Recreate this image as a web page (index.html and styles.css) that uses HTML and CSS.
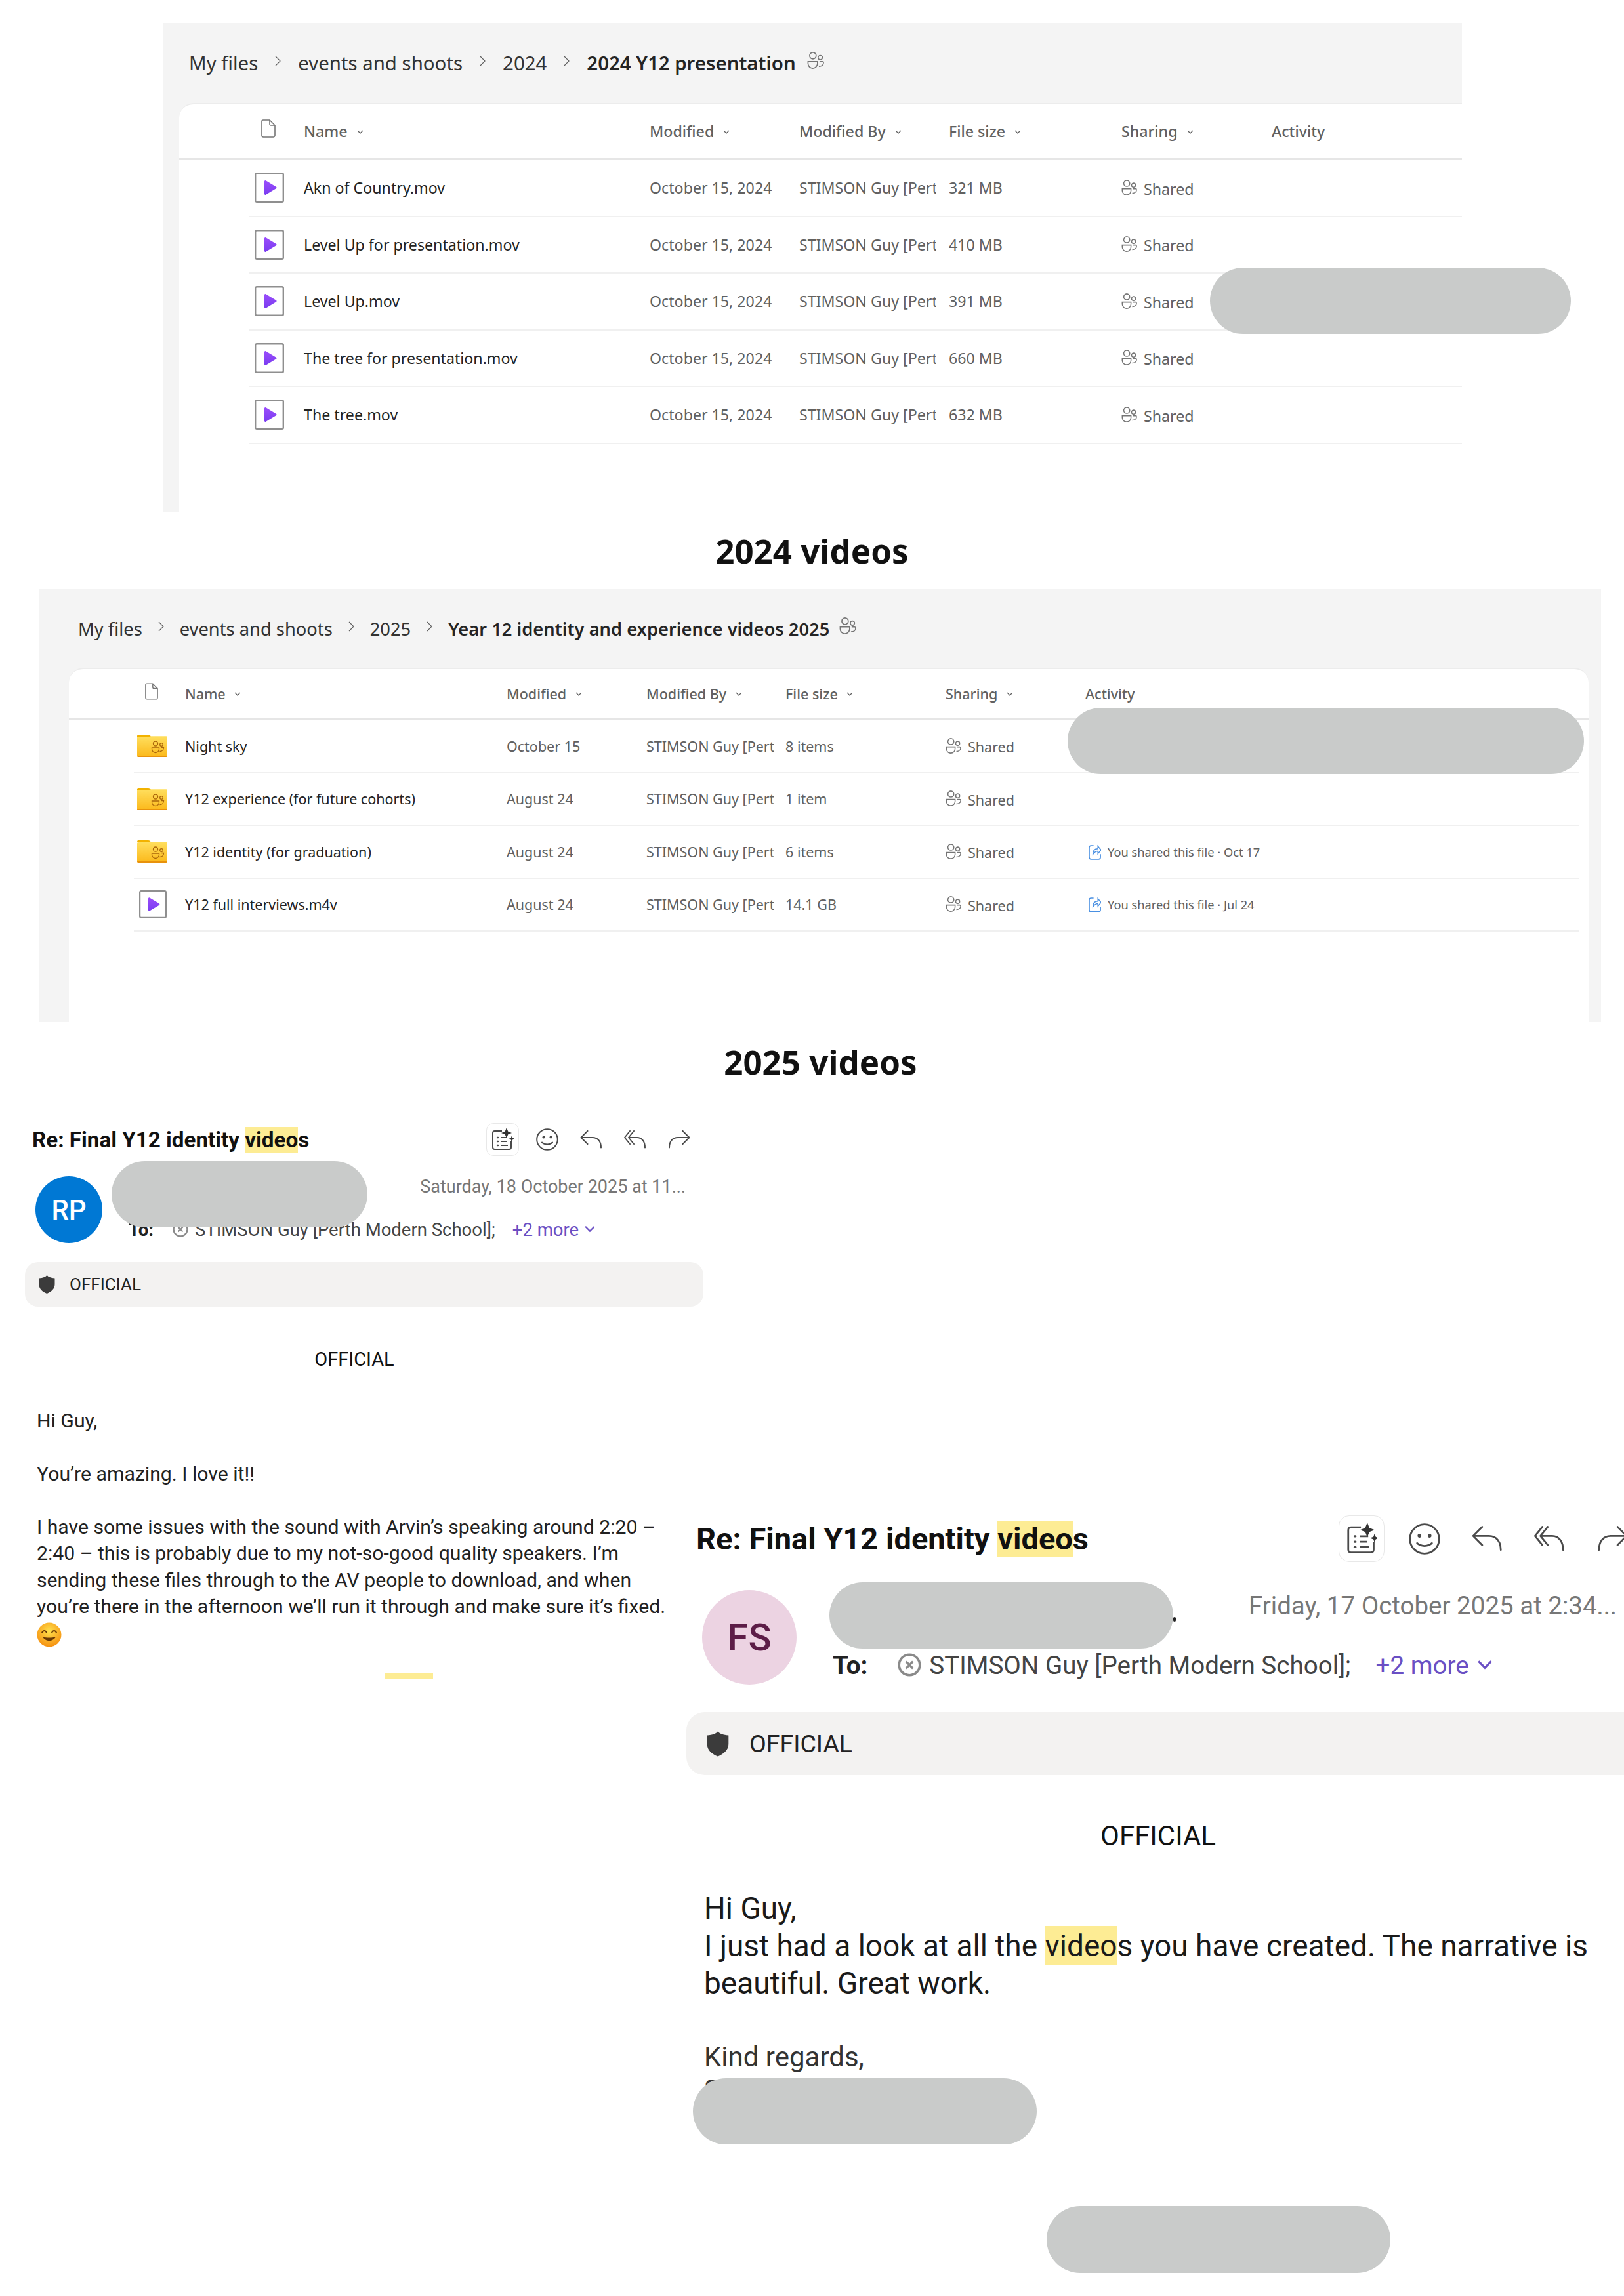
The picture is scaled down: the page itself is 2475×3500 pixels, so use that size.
FILE: index.html
```html
<!DOCTYPE html>
<html lang="en">
<head>
    <meta charset="UTF-8">
    <meta name="viewport" content="width=device-width, initial-scale=1.0">
    <title>Y12 videos</title>
    <link rel="stylesheet" href="styles.css">
</head>
<body>
    <svg class="defs" width="0" height="0">
        <defs>
            <symbol id="people" viewBox="0 0 22 22">
                <g fill="none" stroke="currentColor" stroke-width="1.4">
                    <circle cx="7.5" cy="5" r="4.2"/>
                    <circle cx="17" cy="7.5" r="2.8"/>
                    <path d="M1.2 12.5h12.2v2.6a6.1 6.1 0 0 1-12.2 0z"/>
                    <path d="M16 12.5h3.8a1.4 1.4 0 0 1 1.4 1.4c0 2.8-2.4 4.8-6 4.8"/>
                </g>
            </symbol>
            <symbol id="chev-right" viewBox="0 0 11 16">
                <path d="M2 1l7 7-7 7" fill="none" stroke="#616161" stroke-width="1.2"/>
            </symbol>
            <symbol id="chev-down" viewBox="0 0 10 7">
                <path d="M1 1l4 4 4-4" fill="none" stroke="currentColor" stroke-width="1.3"/>
            </symbol>
            <symbol id="doc" viewBox="0 0 22 28">
                <path d="M3 1h10l8 8v15.5a2.5 2.5 0 0 1-2.5 2.5h-15A2.5 2.5 0 0 1 1 24.500V3a2 2 0 0 1 2-2zM13 1v6a2 2 0 0 0 2 2h6" fill="none" stroke="#757575" stroke-width="1.6"/>
            </symbol>
            <linearGradient id="purple" x1="0" y1="0" x2="0" y2="1">
                <stop offset="0" stop-color="#9a4dfb"/>
                <stop offset="1" stop-color="#7a3cf0"/>
            </linearGradient>
            <symbol id="play" viewBox="0 0 45 46">
                <rect x="1.200" y="1.200" width="42.600" height="43.600" rx="2" fill="#fff" stroke="#8f8f8f" stroke-width="2.400"/>
                <path d="M15 13.500a1.500 1.500 0 0 1 2.200-1.300l15.600 9.500a1.500 1.500 0 0 1 0 2.600l-15.600 9.500a1.500 1.500 0 0 1-2.200-1.300z" fill="url(#purple)"/>
            </symbol>
            <linearGradient id="folder-fill" x1="0" y1="0" x2="0" y2="1">
                <stop offset="0" stop-color="#ffdf5e"/>
                <stop offset="1" stop-color="#fbb81a"/>
            </linearGradient>
            <symbol id="folder" viewBox="0 0 46 34">
                <path d="M2 0h15c2 0 3 1 4 3h-21V2a2 2 0 0 1 2-2z" fill="#f2b200"/>
                <path d="M0 4.500a1.500 1.500 0 0 1 1.500-1.500h17l3-.8h23a1.500 1.500 0 0 1 1.500 1.500V32a2 2 0 0 1-2 2H2a2 2 0 0 1-2-2z" fill="url(#folder-fill)"/>
                <path d="M0 32h46a2 2 0 0 1-2 2H2a2 2 0 0 1-2-2z" fill="#e8920c"/>
                <g fill="none" stroke="#a9650a" stroke-width="1.300">
                    <circle cx="28" cy="13.500" r="3.500"/>
                    <circle cx="37" cy="15" r="2.300"/>
                    <path d="M22.500 20h11v2a5.500 5.500 0 0 1-11 0z"/>
                    <path d="M36 19.500h4.500c0 3.500-2.500 6-6 6"/>
                </g>
            </symbol>
            <symbol id="shared-file" viewBox="0 0 20 26">
                <path d="M8 3H4a3 3 0 0 0-3 3v16a3 3 0 0 0 3 3h12a3 3 0 0 0 3-3v-5" fill="none" stroke="#4a90e2" stroke-width="1.800"/>
                <path d="M7 17c0-6 3-9 8-9V4l5 6-5 6v-4c-3 0-5 1-8 5z" fill="none" stroke="#4a90e2" stroke-width="1.600"/>
            </symbol>
            <symbol id="copilot" viewBox="0 0 34 36">
                <path d="M16 5H5a3 3 0 0 0-3 3v22a3 3 0 0 0 3 3h22a3 3 0 0 0 3-3V21" fill="none" stroke="#4a4a4a" stroke-width="2"/>
                <path d="M9 15h1M9 21h1M9 27h1" stroke="#4a4a4a" stroke-width="2.400" stroke-linecap="round"/>
                <path d="M15 15h9M15 21h8M15 27h10" stroke="#4a4a4a" stroke-width="2"/>
                <path d="M23 0l2.300 5.700L31 8l-5.700 2.300L23 16l-2.300-5.700L15 8l5.700-2.300zM31 12l1.300 3.700L36 17l-3.700 1.300L31 22l-1.300-3.700L26 17l3.700-1.300z" fill="#333"/>
            </symbol>
            <symbol id="smile" viewBox="0 0 34 34">
                <circle cx="17" cy="17" r="15.800" fill="none" stroke="#4a4a4a" stroke-width="2"/>
                <circle cx="11.500" cy="13.500" r="2" fill="#4a4a4a"/>
                <circle cx="22.500" cy="13.500" r="2" fill="#4a4a4a"/>
                <path d="M9 21.500c4 4 12 4 16 0" fill="none" stroke="#4a4a4a" stroke-width="2" stroke-linecap="round"/>
            </symbol>
            <symbol id="reply" viewBox="0 0 34 28">
                <path d="M11.500 1L1.500 11l10 10M1.500 11H19c8 0 13 6 13 15.500" fill="none" stroke="#4a4a4a" stroke-width="2" stroke-linecap="round" stroke-linejoin="round"/>
            </symbol>
            <symbol id="reply-all" viewBox="0 0 34 28">
                <path d="M9 1L1 11l8 10M15 1L7 11l8 10M7 11h13c7 0 12 6 12 15.500" fill="none" stroke="#4a4a4a" stroke-width="2" stroke-linecap="round" stroke-linejoin="round"/>
            </symbol>
            <symbol id="forward" viewBox="0 0 34 28">
                <path d="M22.500 1l10 10-10 10M32.500 11H15C7 11 2 17 2 26.500" fill="none" stroke="#4a4a4a" stroke-width="2" stroke-linecap="round" stroke-linejoin="round"/>
            </symbol>
            <symbol id="shield" viewBox="0 0 25 28">
                <path d="M12.500 0c2 2.500 6 4 12 4.500V14c0 6.500-5 11-12 14C5 25 .5 20.500.5 14V4.500C6.500 4 10.500 2.500 12.500 0z" fill="#3b3b3b"/>
            </symbol>
            <symbol id="blocked" viewBox="0 0 24 24">
                <circle cx="12" cy="12" r="10.500" fill="none" stroke="#8a8a8a" stroke-width="2.400"/>
                <path d="M8.500 8.500l7 7M15.500 8.500l-7 7" stroke="#8a8a8a" stroke-width="2.200"/>
            </symbol>
            <radialGradient id="emoji-fill" cx="0.500" cy="0.350" r="0.700">
                <stop offset="0" stop-color="#ffe14d"/>
                <stop offset="1" stop-color="#f58a0b"/>
            </radialGradient>
        </defs>
    </svg>

    <!-- 2024 folder -->
    <section class="drive drive-a">
        <div class="crumbs">
            <span>My files</span>
            <svg class="chev"><use href="#chev-right"/></svg>
            <span>events and shoots</span>
            <svg class="chev"><use href="#chev-right"/></svg>
            <span>2024</span>
            <svg class="chev"><use href="#chev-right"/></svg>
            <b>2024 Y12 presentation</b>
            <svg class="crumb-people"><use href="#people"/></svg>
        </div>
        <div class="list">
            <div class="row head">
                <svg class="doc"><use href="#doc"/></svg>
                <span>Name <svg class="sort"><use href="#chev-down"/></svg></span>
                <span>Modified <svg class="sort"><use href="#chev-down"/></svg></span>
                <span>Modified By <svg class="sort"><use href="#chev-down"/></svg></span>
                <span>File size <svg class="sort"><use href="#chev-down"/></svg></span>
                <span>Sharing <svg class="sort"><use href="#chev-down"/></svg></span>
                <span>Activity</span>
            </div>
            <div class="row">
                <svg class="play"><use href="#play"/></svg>
                <span class="name">Akn of Country.mov</span>
                <span>October 15, 2024</span>
                <span class="by">STIMSON Guy [Pert</span>
                <span>321 MB</span>
                <span class="shared"><svg class="people"><use href="#people"/></svg>Shared</span>
            </div>
            <div class="row">
                <svg class="play"><use href="#play"/></svg>
                <span class="name">Level Up for presentation.mov</span>
                <span>October 15, 2024</span>
                <span class="by">STIMSON Guy [Pert</span>
                <span>410 MB</span>
                <span class="shared"><svg class="people"><use href="#people"/></svg>Shared</span>
            </div>
            <div class="row">
                <svg class="play"><use href="#play"/></svg>
                <span class="name">Level Up.mov</span>
                <span>October 15, 2024</span>
                <span class="by">STIMSON Guy [Pert</span>
                <span>391 MB</span>
                <span class="shared"><svg class="people"><use href="#people"/></svg>Shared</span>
            </div>
            <div class="row">
                <svg class="play"><use href="#play"/></svg>
                <span class="name">The tree for presentation.mov</span>
                <span>October 15, 2024</span>
                <span class="by">STIMSON Guy [Pert</span>
                <span>660 MB</span>
                <span class="shared"><svg class="people"><use href="#people"/></svg>Shared</span>
            </div>
            <div class="row">
                <svg class="play"><use href="#play"/></svg>
                <span class="name">The tree.mov</span>
                <span>October 15, 2024</span>
                <span class="by">STIMSON Guy [Pert</span>
                <span>632 MB</span>
                <span class="shared"><svg class="people"><use href="#people"/></svg>Shared</span>
            </div>
        </div>
    </section>

    <h2 class="title title-a">2024 videos</h2>

    <!-- 2025 folder -->
    <section class="drive drive-b">
        <div class="crumbs">
            <span>My files</span>
            <svg class="chev"><use href="#chev-right"/></svg>
            <span>events and shoots</span>
            <svg class="chev"><use href="#chev-right"/></svg>
            <span>2025</span>
            <svg class="chev"><use href="#chev-right"/></svg>
            <b>Year 12 identity and experience videos 2025</b>
            <svg class="crumb-people"><use href="#people"/></svg>
        </div>
        <div class="list">
            <div class="row head">
                <svg class="doc"><use href="#doc"/></svg>
                <span>Name <svg class="sort"><use href="#chev-down"/></svg></span>
                <span>Modified <svg class="sort"><use href="#chev-down"/></svg></span>
                <span>Modified By <svg class="sort"><use href="#chev-down"/></svg></span>
                <span>File size <svg class="sort"><use href="#chev-down"/></svg></span>
                <span>Sharing <svg class="sort"><use href="#chev-down"/></svg></span>
                <span>Activity</span>
            </div>
            <div class="row">
                <svg class="folder"><use href="#folder"/></svg>
                <span class="name">Night sky</span>
                <span>October 15</span>
                <span class="by">STIMSON Guy [Pert</span>
                <span>8 items</span>
                <span class="shared"><svg class="people"><use href="#people"/></svg>Shared</span>
            </div>
            <div class="row">
                <svg class="folder"><use href="#folder"/></svg>
                <span class="name">Y12 experience (for future cohorts)</span>
                <span>August 24</span>
                <span class="by">STIMSON Guy [Pert</span>
                <span>1 item</span>
                <span class="shared"><svg class="people"><use href="#people"/></svg>Shared</span>
            </div>
            <div class="row">
                <svg class="folder"><use href="#folder"/></svg>
                <span class="name">Y12 identity (for graduation)</span>
                <span>August 24</span>
                <span class="by">STIMSON Guy [Pert</span>
                <span>6 items</span>
                <span class="shared"><svg class="people"><use href="#people"/></svg>Shared</span>
                <span class="activity"><svg class="share-ic"><use href="#shared-file"/></svg>You shared this file · Oct 17</span>
            </div>
            <div class="row">
                <svg class="play"><use href="#play"/></svg>
                <span class="name">Y12 full interviews.m4v</span>
                <span>August 24</span>
                <span class="by">STIMSON Guy [Pert</span>
                <span>14.1 GB</span>
                <span class="shared"><svg class="people"><use href="#people"/></svg>Shared</span>
                <span class="activity"><svg class="share-ic"><use href="#shared-file"/></svg>You shared this file · Jul 24</span>
            </div>
        </div>
    </section>

    <h2 class="title title-b">2025 videos</h2>

    <div class="mails">
        <article class="mail mail-a">
            <div class="mail-head">
                <h3 class="subject">Re: Final Y12 identity <span class="hl">video</span>s</h3>
                <div class="tool-btn"><svg class="ic-copilot"><use href="#copilot"/></svg></div>
                <div class="tool"><svg class="ic-smile"><use href="#smile"/></svg></div>
                <div class="tool"><svg class="ic-arrow"><use href="#reply"/></svg></div>
                <div class="tool"><svg class="ic-arrow"><use href="#reply-all"/></svg></div>
                <div class="tool"><svg class="ic-arrow"><use href="#forward"/></svg></div>
            </div>
            <div class="mail-meta">
                <div class="avatar">RP</div>
                <div class="meta-col">
                    <div class="date">Saturday, 18 October 2025 at 11...</div>
                    <div class="to">
                        <b>To:</b>
                        <svg class="blocked"><use href="#blocked"/></svg>
                        <span>STIMSON Guy [Perth Modern School];</span>
                        <span class="more">+2 more <svg class="more-chev"><use href="#chev-down"/></svg></span>
                    </div>
                </div>
            </div>
            <div class="label-bar">
                <svg class="shield"><use href="#shield"/></svg>
                <span>OFFICIAL</span>
            </div>
            <div class="mail-body">
                <div class="official">OFFICIAL</div>
                <p>Hi Guy,</p>
                <p>You’re amazing. I love it!!</p>
                <p>I have some issues with the sound with Arvin’s speaking around 2:20 –<br>
                2:40 – this is probably due to my not-so-good quality speakers. I’m<br>
                sending these files through to the AV people to download, and when<br>
                you’re there in the afternoon we’ll run it through and make sure it’s fixed.<br>
                <svg class="emoji" viewBox="0 0 38 38">
                    <circle cx="19" cy="19" r="18.500" fill="url(#emoji-fill)"/>
                    <path d="M8 16c1.500-4 5.500-4 7 0M23 16c1.500-4 5.500-4 7 0" fill="none" stroke="#6b3a05" stroke-width="2" stroke-linecap="round"/>
                    <path d="M9 22c4 8 16 8 20 0-6 2-14 2-20 0z" fill="#6b3a05"/>
                </svg></p>
                <div class="stray-hl"></div>
            </div>
        </article>

        <article class="mail mail-b">
            <div class="mail-head">
                <h3 class="subject">Re: Final Y12 identity <span class="hl">video</span>s</h3>
                <div class="tool-btn"><svg class="ic-copilot"><use href="#copilot"/></svg></div>
                <div class="tool"><svg class="ic-smile"><use href="#smile"/></svg></div>
                <div class="tool"><svg class="ic-arrow"><use href="#reply"/></svg></div>
                <div class="tool"><svg class="ic-arrow"><use href="#reply-all"/></svg></div>
                <div class="tool"><svg class="ic-arrow"><use href="#forward"/></svg></div>
            </div>
            <div class="mail-meta">
                <div class="avatar">FS</div>
                <div class="meta-col">
                    <div class="date">Friday, 17 October 2025 at 2:34...</div>
                    <div class="to">
                        <b>To:</b>
                        <svg class="blocked"><use href="#blocked"/></svg>
                        <span>STIMSON Guy [Perth Modern School];</span>
                        <span class="more">+2 more <svg class="more-chev"><use href="#chev-down"/></svg></span>
                    </div>
                </div>
            </div>
            <div class="label-bar">
                <svg class="shield"><use href="#shield"/></svg>
                <span>OFFICIAL</span>
            </div>
            <div class="mail-body">
                <div class="official">OFFICIAL</div>
                <p>Hi Guy,<br>
                I just had a look at all the <span class="hl">video</span>s you have created. The narrative is<br>
                beautiful. Great work.</p>
                <p class="regards">Kind regards,<br>S</p>
            </div>
        </article>
    </div>

    <!-- names blanked out on top of the screenshots -->
    <div class="redact r1"></div>
    <div class="redact r2"></div>
    <div class="redact r3"></div>
    <div class="redact r4"></div>
    <div class="name-dot"></div>
    <div class="redact r5"></div>
    <div class="redact r6"></div>
</body>
</html>
```

FILE: styles.css
```css
html,body{
    margin: 0;
    padding: 0;
    background: #fff;
}
body{
    position: relative;
    width: 2475px;
    height: 3500px;
    overflow: hidden;
    font-family: "Noto Sans", "Open Sans", sans-serif;
    color: #242424;
}
.defs{
    position: absolute;
}

/* drive panels */
.drive{
    background: #f4f4f4;
    box-sizing: border-box;
    display: flex;
    flex-direction: column;
}
.drive-a{
    width: 1980px;
    height: 745px;
    margin: 35px 0 0 248px;
}
.drive-b{
    width: 2380px;
    height: 660px;
    margin-left: 60px;
}
.crumbs{
    display: flex;
    align-items: center;
    color: #333;
}
.crumbs b{
    font-weight: 600;
    color: #242424;
}
.drive-a .crumbs{
    height: 122px;
    padding-left: 40px;
    gap: 25px;
    font-size: 29.400px;
}
.drive-b .crumbs{
    height: 120px;
    padding-left: 59px;
    gap: 23px;
    font-size: 27.300px;
}
.chev{
    width: 11px;
    height: 16px;
    margin-top: -6px;
}
.crumb-people{
    width: 26px;
    height: 26px;
    color: #757575;
    margin: -8px 0 0 -8px;
}
.list{
    flex: 1;
    background: #fff;
    border-top: 2px solid #ececec;
    box-sizing: border-box;
}
.drive-a .list{
    margin-left: 25px;
    border-top-left-radius: 22px;
}
.drive-b .list{
    margin: 0 19px 0 45px;
    border-radius: 22px 22px 0 0;
}
.row{
    display: grid;
    align-items: center;
    justify-items: start;
    border-bottom: 2px solid #f0f0f0;
    box-sizing: border-box;
    color: #616161;
}
.drive-a .row{
    grid-template-columns: 84px 527px 228px 228px 263px 229px 1fr;
    height: 86.5px;
    margin-left: 106px;
    font-size: 23.200px;
}
.drive-b .row{
    grid-template-columns: 78px 490px 213px 212px 244px 213px 1fr;
    height: 80.5px;
    margin: 0 14px 0 99px;
    font-size: 21.500px;
}
.row.head{
    margin-right: 0;
    border-bottom: 3px solid #e6e6e6;
    font-weight: 500;
}
.drive-a .row.head{
    height: 85px;
    margin-left: 0;
    padding-left: 106px;
}
.drive-b .row.head{
    height: 78px;
    margin-left: 0;
    padding-left: 99px;
}
.doc{
    width: 22px;
    height: 28px;
    margin: -8px 0 0 19px;
}
.drive-b .doc{
    width: 20px;
    height: 26px;
    margin-left: 17px;
}
.sort{
    width: 10px;
    height: 7px;
    margin: 0 0 4px 8px;
    color: #616161;
}
.play{
    width: 45px;
    height: 46px;
    margin-left: 9px;
}
.drive-b .play{
    width: 42px;
    height: 43px;
    margin-left: 8px;
}
.folder{
    width: 46px;
    height: 34px;
    margin-left: 5px;
}
.name{
    color: #242424;
}
.by{
    width: 209px;
    overflow: hidden;
    white-space: nowrap;
}
.drive-b .by{
    width: 194px;
}
.shared{
    display: flex;
    align-items: center;
    gap: 10px;
    padding-top: 3px;
}
.people{
    width: 24px;
    height: 24px;
    color: #757575;
    margin-top: -4px;
}
.activity{
    display: flex;
    align-items: center;
    gap: 10px;
    font-size: 18.300px;
    white-space: nowrap;
}
.share-ic{
    width: 19px;
    height: 25px;
    margin-left: 5px;
}

/* section titles */
.title{
    margin: 0;
    display: flex;
    align-items: center;
    justify-content: center;
    font-size: 51px;
    font-weight: 700;
    color: #111;
}
.title-a{
    height: 118px;
}
.title-b{
    height: 120px;
    padding-left: 26px;
}

/* mail cards */
.mails{
    display: flex;
    align-items: flex-start;
    padding-left: 38px;
    font-family: Roboto, "Noto Sans", sans-serif;
}
.mail-a{
    flex: 0 0 1034px;
}
.mail-b{
    flex: 0 0 1480px;
    margin: 632px 0 0 -26px;
}
.mail-head{
    display: flex;
    align-items: center;
}
.subject{
    margin: 0;
    font-weight: 700;
    color: #111;
}
.hl{
    background: #fdec94;
}
.tool{
    display: flex;
    align-items: center;
    justify-content: center;
}
.tool-btn{
    display: flex;
    align-items: center;
    justify-content: center;
    box-sizing: border-box;
    border: 1.500px solid #e8e8e8;
    background: #fff;
}
.mail-meta{
    display: flex;
}
.avatar{
    display: flex;
    align-items: center;
    justify-content: center;
    border-radius: 50%;
    flex: none;
    font-weight: 500;
}
.meta-col{
    display: flex;
    flex-direction: column;
}
.date{
    text-align: right;
    color: #777;
    white-space: nowrap;
}
.to{
    display: flex;
    align-items: center;
    white-space: nowrap;
    color: #444;
}
.to b{
    color: #222;
    font-weight: 700;
}
.more{
    color: #6a4fc4;
    display: flex;
    align-items: center;
}
.label-bar{
    display: flex;
    align-items: center;
    background: #f3f2f1;
    color: #222;
}
.mail-body p{
    margin: 0;
}
.official{
    text-align: center;
    color: #111;
}

/* left mail, smaller */
.mail-a{
    padding-top: 34px;
}
.mail-a .mail-head{
    height: 50px;
}
.mail-a .subject{
    flex: 0 0 703px;
    padding-left: 11px;
    box-sizing: border-box;
    font-size: 33.200px;
}
.mail-a .tool-btn{
    width: 50px;
    height: 50px;
    border-radius: 11px;
    margin-right: 9.500px;
}
.mail-a .tool{
    width: 67px;
}
.ic-copilot{
    width: 34px;
    height: 36px;
}
.ic-smile{
    width: 34px;
    height: 34px;
}
.ic-arrow{
    width: 34px;
    height: 28px;
}
.mail-a .mail-meta{
    margin-top: 31px;
    padding-left: 16px;
    gap: 40px;
}
.mail-a .avatar{
    width: 102px;
    height: 102px;
    background: #0078d4;
    color: #fff;
    font-size: 42px;
}
.mail-a .meta-col{
    width: 849px;
}
.mail-a .date{
    height: 32px;
    line-height: 32px;
    font-size: 27px;
}
.mail-a .to{
    height: 32px;
    margin-top: 33px;
    font-size: 27.500px;
}
.mail-a .blocked{
    width: 24px;
    height: 24px;
    margin: 0 10px 0 29px;
}
.mail-a .more{
    margin-left: 26px;
    gap: 8px;
}
.mail-a .more-chev{
    width: 18px;
    height: 12px;
}
.mail-a .label-bar{
    height: 68px;
    margin-top: 29px;
    padding-left: 21px;
    gap: 22px;
    border-radius: 20px;
    font-size: 26px;
}
.mail-a .shield{
    width: 25px;
    height: 28px;
}
.mail-a .mail-body{
    padding-left: 18px;
    width: 968px;
    font-size: 30.200px;
    line-height: 40.400px;
    color: #222;
}
.mail-a .official{
    margin: 60px 0 54px;
    font-size: 29px;
}
.mail-a .mail-body p{
    margin-bottom: 40.400px;
    white-space: nowrap;
}
.emoji{
    width: 38px;
    height: 38px;
    vertical-align: middle;
}
.stray-hl{
    width: 73px;
    height: 8px;
    margin: 39px 0 0 531px;
    background: #fdec94;
}

/* right mail, larger and cut by the page edge */
.mail-b .mail-head{
    height: 71px;
}
.mail-b .subject{
    flex: 0 0 994px;
    padding-left: 15px;
    box-sizing: border-box;
    font-size: 47px;
}
.mail-b .tool-btn{
    flex: none;
    width: 70px;
    height: 71px;
    border-radius: 16px;
    margin-right: 13px;
}
.mail-b .tool{
    flex: 0 0 95.500px;
}
.mail-b .ic-copilot{
    width: 47px;
    height: 50px;
}
.mail-b .ic-smile{
    width: 48px;
    height: 48px;
}
.mail-b .ic-arrow{
    width: 47px;
    height: 39px;
}
.mail-b .mail-meta{
    margin-top: 43px;
    padding-left: 24px;
    gap: 55px;
}
.mail-b .avatar{
    width: 144px;
    height: 144px;
    background: #ecd3e2;
    color: #5c1d47;
    font-size: 58px;
}
.mail-b .meta-col{
    width: 1195px;
}
.mail-b .date{
    height: 48px;
    line-height: 48px;
    font-size: 38.500px;
}
.mail-b .to{
    height: 48px;
    margin-top: 42px;
    font-size: 38.600px;
}
.mail-b .blocked{
    width: 36px;
    height: 36px;
    margin: 0 12px 0 46px;
}
.mail-b .more{
    margin-left: 38px;
    gap: 11px;
}
.mail-b .more-chev{
    width: 26px;
    height: 17px;
}
.mail-b .label-bar{
    height: 96px;
    margin-top: 42px;
    padding-left: 31px;
    gap: 31px;
    border-radius: 28px 0 0 28px;
    font-size: 37.500px;
}
.mail-b .shield{
    width: 34px;
    height: 39px;
}
.mail-b .mail-body{
    padding-left: 27px;
    width: 1384px;
    font-size: 46px;
    line-height: 57px;
    color: #1a1a1a;
}
.mail-b .mail-body .hl{
    padding: 3px 0;
}
.mail-b .official{
    margin: 64px 0 54px;
    font-size: 42px;
    line-height: 57px;
}
.mail-b .mail-body p{
    white-space: nowrap;
}
.mail-b .mail-body .regards{
    margin-top: 59px;
    font-size: 42px;
    line-height: 50px;
    color: #333;
}

/* grey blobs */
.redact{
    position: absolute;
    background: #c9cbca;
    border-radius: 51px;
}
.r1{ left: 1844px; top: 408px; width: 550px; height: 101px; }
.r2{ left: 1627px; top: 1079px; width: 787px; height: 101px; }
.r3{ left: 170px; top: 1770px; width: 390px; height: 101px; }
.r4{ left: 1264px; top: 2412px; width: 524px; height: 101px; }
.r5{ left: 1056px; top: 3168px; width: 524px; height: 101px; }
.r6{ left: 1595px; top: 3363px; width: 524px; height: 102px; }
.name-dot{
    position: absolute;
    left: 1788px;
    top: 2465px;
    width: 4px;
    height: 7px;
    border-radius: 2px;
    background: #222;
}
```
